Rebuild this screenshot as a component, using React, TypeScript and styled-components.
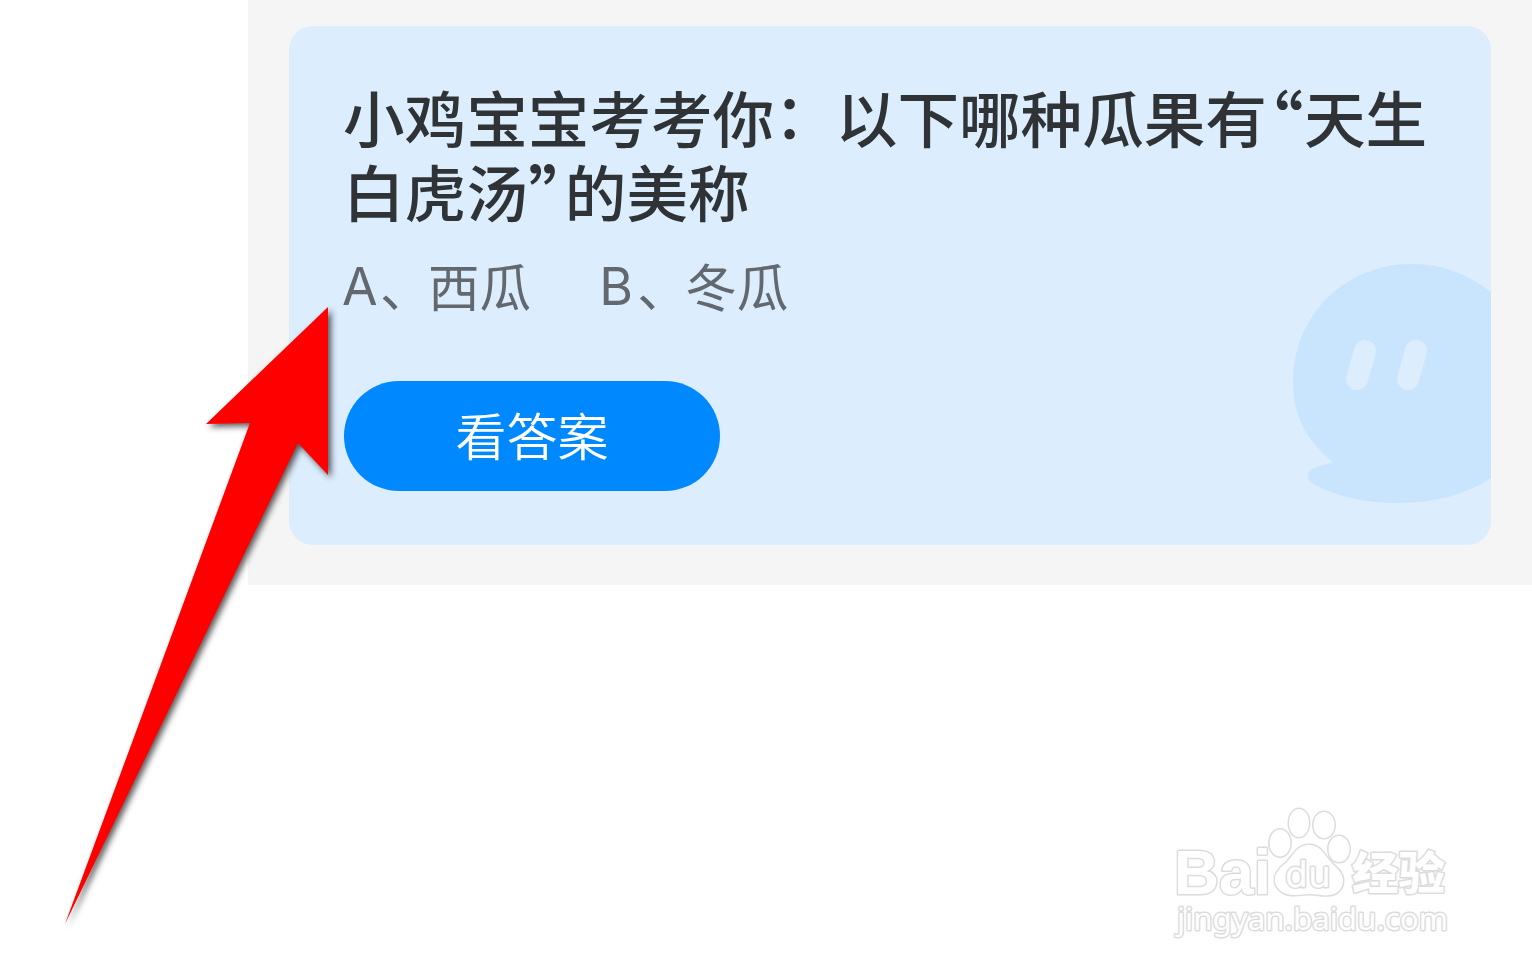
import React from 'react';
import styled, { createGlobalStyle } from 'styled-components';

const GlobalStyle = createGlobalStyle`
  body {
    margin: 0;
    background: #ffffff;
    font-family: 'Noto Sans CJK SC', 'Noto Sans', sans-serif;
  }
`;

const Page = styled.main`
  position: relative;
  width: 1532px;
  height: 973px;
  overflow: hidden;
`;

const Panel = styled.section`
  box-sizing: border-box;
  margin-left: 248px;
  height: 585px;
  padding: 26px 41px 40px;
  background: #f5f5f5;
`;

const Card = styled.article`
  position: relative;
  box-sizing: border-box;
  height: 519px;
  padding: 54px 55px 0 54px;
  border-radius: 24px;
  background: #dcedfe;
  overflow: hidden;
`;

const Title = styled.h1`
  margin: 0;
  color: #303336;
  font-size: 61.6px;
  font-weight: 500;
  line-height: 74px;
  white-space: nowrap;
`;

const Colon = styled.span`
  line-height: 0;
  vertical-align: 4px;
`;

const Quote = styled.span`
  display: inline-block;
  width: 37px;
  font-size: 70px;
  line-height: 0;
  text-align: center;
  vertical-align: -7px;
  font-feature-settings: 'palt';
`;

const Options = styled.div`
  display: flex;
  gap: 69px;
  margin-top: 19px;
  color: #62686e;
  font-size: 51.6px;
  font-weight: 400;
  line-height: 76px;
`;

const Option = styled.span`
  display: flex;
`;

const Letter = styled.span`
  width: 38px;
  margin-left: -1px;
  padding-top: 3px;
  font-family: Inter, sans-serif;
  font-weight: 400;
  line-height: 73px;
`;

const Comma = styled.span`
  width: 48px;
`;

const AnswerButton = styled.button`
  display: block;
  width: 376px;
  height: 110px;
  margin: 58px 0 0 1px;
  padding: 0 0 4px;
  border: none;
  border-radius: 55px;
  background: #0088ff;
  color: #ffffff;
  font-family: inherit;
  font-size: 51px;
  font-weight: 350;
  line-height: 106px;
`;

const Mascot = styled.svg`
  position: absolute;
  right: 0;
  bottom: 40px;
`;

const Arrow = styled.svg`
  position: absolute;
  left: 40px;
  top: 290px;
  filter: drop-shadow(3px 3px 3px rgba(0, 0, 0, 0.65));
`;

const Watermark = styled.svg`
  position: absolute;
  left: 1160px;
  top: 800px;

  text,
  path,
  ellipse {
    fill: #ffffff;
    stroke: #dcdcdc;
    stroke-width: 3px;
    stroke-linejoin: round;
    paint-order: stroke;
  }
`;

const App: React.FC = () => {
  return (
    <>
      <GlobalStyle />
      <Page>
        <Panel>
          <Card>
            <Mascot width="200" height="242" viewBox="0 0 200 242">
              <path
                d="M200 29C177 11 151 1 121 1C53 1 2 53 2 120C2 153 16 178 42 199C34 202 27 203 21 206C15 209 16 218 22 221C44 233 73 240 107 240C143 240 174 232 200 215Z"
                fill="#c9e5fe"
              />
              <path d="M74 88L66 116M125 88L117 116" stroke="#dcedfe" strokeWidth="22" strokeLinecap="round" />
            </Mascot>
            <Title>
              小鸡宝宝考考你<Colon>：</Colon>以下哪种瓜果有<Quote>“</Quote>天生
              <br />
              白虎汤<Quote>”</Quote>的美称
            </Title>
            <Options>
              <Option>
                <Letter>A</Letter>
                <Comma>、</Comma>
                西瓜
              </Option>
              <Option>
                <Letter>B</Letter>
                <Comma>、</Comma>
                冬瓜
              </Option>
            </Options>
            <AnswerButton>看答案</AnswerButton>
          </Card>
        </Panel>

        <Arrow width="310" height="650" viewBox="0 0 310 650">
          <path d="M288 17L166 134L210 133L25 634L258 153L288 185Z" fill="#ff0000" />
        </Arrow>

        <Watermark width="320" height="160" viewBox="0 0 320 160">
          <text x="14" y="94" fontFamily="Liberation Sans" fontWeight="700" fontSize="63" textLength="97" lengthAdjust="spacingAndGlyphs">Bai</text>
          <ellipse cx="120" cy="43" rx="10.5" ry="13.5" />
          <ellipse cx="139" cy="23" rx="10" ry="14" />
          <ellipse cx="164" cy="25" rx="10.5" ry="13" />
          <ellipse cx="179" cy="49" rx="10.5" ry="13" />
          <path d="M149 45C137 45 133 56 126 63C118 69 114 75 115 82C117 91 125 95 134 95C142 95 145 94 149 94C158 94 162 96 170 95C179 94 183 87 183 80C183 72 175 67 169 60C163 52 159 45 149 45Z" />
          <text x="125" y="87" fontFamily="DejaVu Sans" fontSize="35" textLength="46" lengthAdjust="spacingAndGlyphs">du</text>
          <text x="192" y="90" fontFamily="Noto Sans CJK SC" fontWeight="900" fontSize="45" textLength="93" lengthAdjust="spacingAndGlyphs">经验</text>
          <text x="17" y="130" fontFamily="Noto Sans" fontWeight="400" fontSize="31" textLength="271" lengthAdjust="spacingAndGlyphs">jingyan.baidu.com</text>
        </Watermark>
      </Page>
    </>
  );
};

export default App;
